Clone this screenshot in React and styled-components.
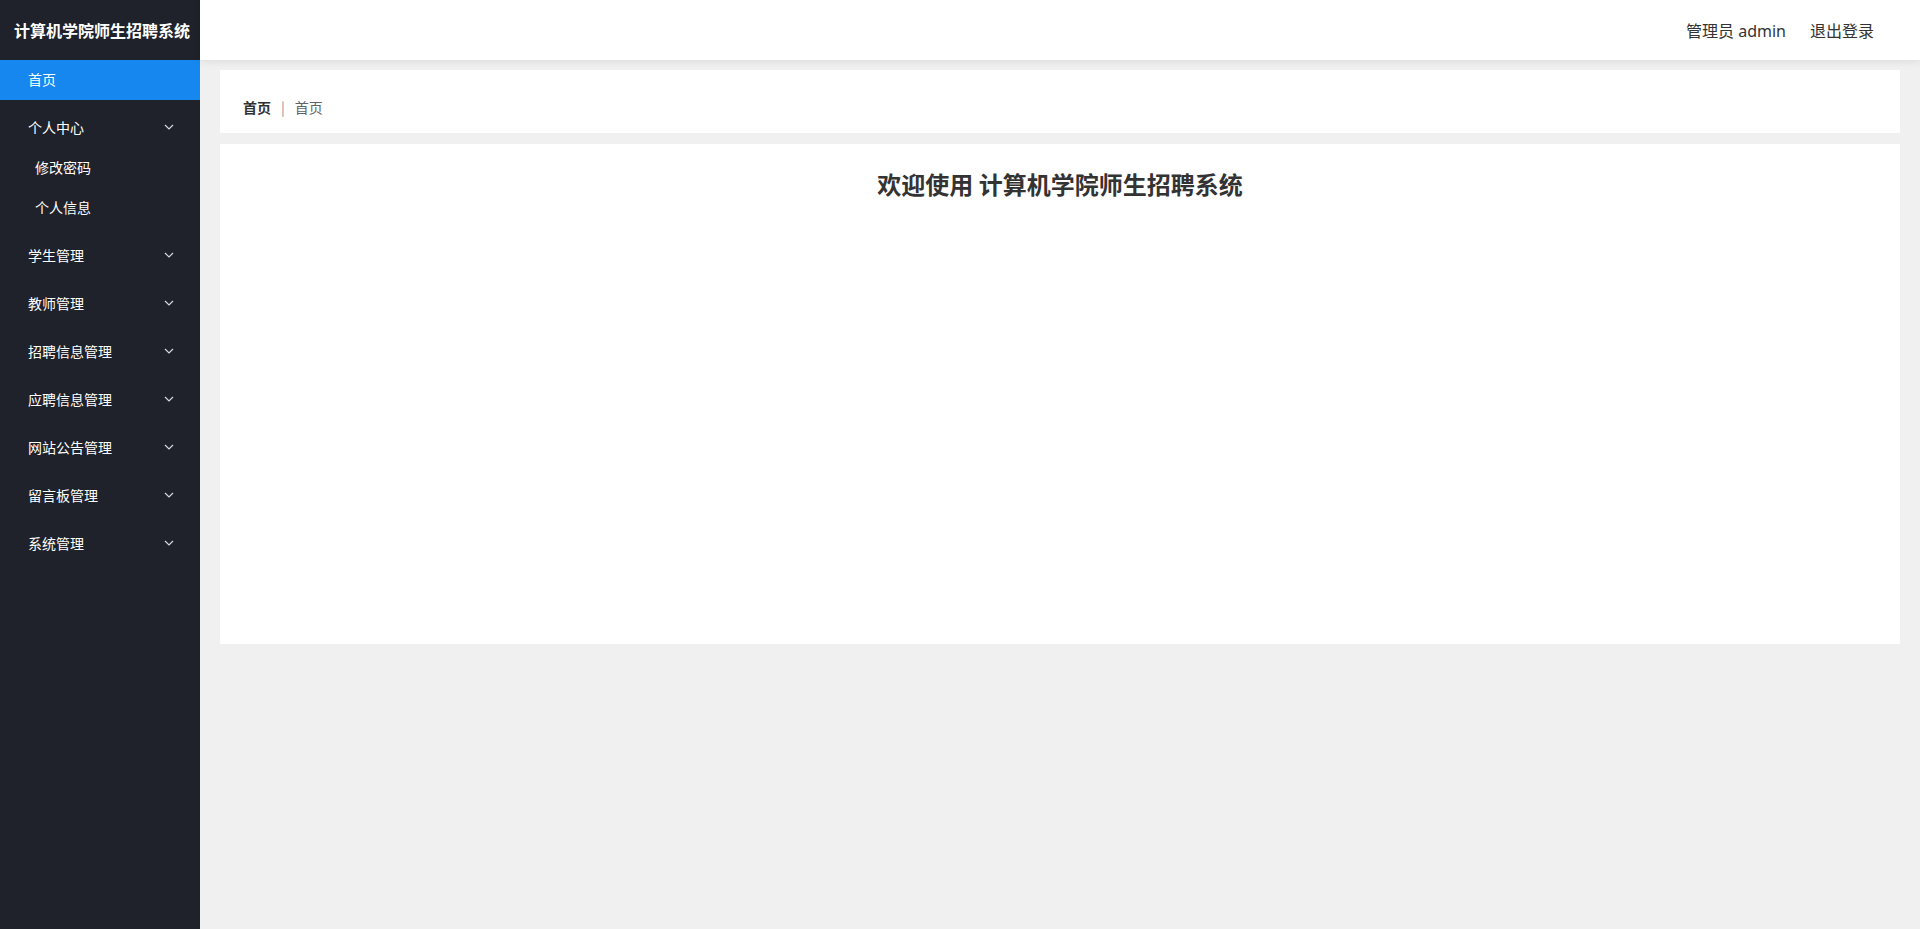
import React from "react";
import styled, { createGlobalStyle } from "styled-components";

const GlobalStyle = createGlobalStyle`
  * { box-sizing: border-box; }
  body {
    margin: 0;
    font-family: "Noto Sans", "Noto Sans CJK SC", sans-serif;
    background: #f0f0f0;
  }
`;

const Layout = styled.div`
  display: flex;
  width: 100%;
  height: 100vh;
  overflow: hidden;
`;

const Sidebar = styled.aside`
  width: 200px;
  flex-shrink: 0;
  background: #1f222a;
  display: flex;
  flex-direction: column;
`;

const Logo = styled.div`
  height: 60px;
  padding-left: 4px;
  display: flex;
  align-items: center;
  justify-content: center;
  color: #fff;
  font-size: 16px;
  font-weight: 700;
  font-family: "Noto Sans CJK SC", sans-serif;
`;

const MenuRow = styled.div`
  height: 40px;
  margin-top: ${(p) => (p.$first || p.$sub ? "0" : "8px")};
  padding: 0 26px 2px ${(p) => (p.$sub ? "35px" : "28px")};
  display: flex;
  align-items: center;
  justify-content: space-between;
  font-size: 14px;
  color: #fff;
  background: ${(p) => (p.$active ? "#1787f0" : "transparent")};
  font-family: "Noto Sans CJK SC", sans-serif;
  cursor: pointer;
`;

const Chevron = () => (
  <svg width="10" height="6" viewBox="0 0 10 6" fill="none">
    <path d="M1 1l4 4 4-4" stroke="#d6d8dc" strokeWidth="1.2" />
  </svg>
);

const Main = styled.div`
  flex: 1;
  display: flex;
  flex-direction: column;
  min-width: 0;
`;

const Header = styled.header`
  height: 60px;
  flex-shrink: 0;
  background: #fff;
  box-shadow: 0 2px 8px rgba(0, 0, 0, 0.08);
  display: flex;
  align-items: center;
  justify-content: flex-end;
  gap: 24px;
  padding-right: 46px;
  position: relative;
  z-index: 1;
`;

const HeaderText = styled.span`
  font-size: 16px;
  color: #333;
  cursor: ${(p) => (p.$link ? "pointer" : "default")};
`;

const Content = styled.div`
  padding: 10px 20px 20px;
  display: flex;
  flex-direction: column;
  gap: 11px;
`;

const Card = styled.div`
  background: #fff;
`;

const Breadcrumb = styled(Card)`
  height: 63px;
  padding: 29px 23px 0;
  display: flex;
  align-items: flex-start;
  font-size: 14px;
  line-height: 16px;
  font-family: "Noto Sans CJK SC", sans-serif;
`;

const Crumb = styled.span`
  color: ${(p) => (p.$strong ? "#303133" : "#606266")};
  font-weight: ${(p) => (p.$strong ? 700 : 400)};
`;

const Sep = styled.span`
  margin: 0 10px;
  color: #909399;
`;

const Welcome = styled(Card)`
  height: 500px;
  padding-top: 26px;
  text-align: center;
`;

const Title = styled.h2`
  margin: 0;
  font-size: 24px;
  line-height: 28px;
  font-weight: 700;
  color: #333;
  font-family: "Noto Sans CJK SC", sans-serif;
`;

const menus = [
  { name: "个人中心", children: ["修改密码", "个人信息"] },
  { name: "学生管理" },
  { name: "教师管理" },
  { name: "招聘信息管理" },
  { name: "应聘信息管理" },
  { name: "网站公告管理" },
  { name: "留言板管理" },
  { name: "系统管理" },
];

export default function App() {
  return (
    <>
      <GlobalStyle />
      <Layout>
        <Sidebar>
          <Logo>计算机学院师生招聘系统</Logo>
          <MenuRow $first $active>首页</MenuRow>
          {menus.map((m) => (
            <React.Fragment key={m.name}>
              <MenuRow>
                <span>{m.name}</span>
                <Chevron />
              </MenuRow>
              {m.children &&
                m.children.map((c) => (
                  <MenuRow key={c} $sub>
                    {c}
                  </MenuRow>
                ))}
            </React.Fragment>
          ))}
        </Sidebar>
        <Main>
          <Header>
            <HeaderText>管理员 admin</HeaderText>
            <HeaderText $link>退出登录</HeaderText>
          </Header>
          <Content>
            <Breadcrumb>
              <Crumb $strong>首页</Crumb>
              <Sep>|</Sep>
              <Crumb>首页</Crumb>
            </Breadcrumb>
            <Welcome>
              <Title>欢迎使用 计算机学院师生招聘系统</Title>
            </Welcome>
          </Content>
        </Main>
      </Layout>
    </>
  );
}
